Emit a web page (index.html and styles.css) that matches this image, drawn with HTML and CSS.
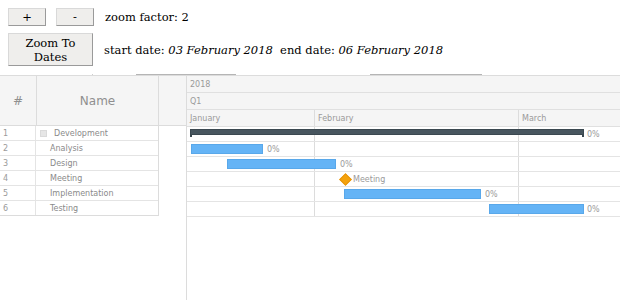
FILE: index.html
```html
<!DOCTYPE html>
<html>
<head>
<meta charset="utf-8">
<link rel="stylesheet" href="styles.css">
</head>
<body>
<div class="controls">
  <div class="ctrl-row">
    <button class="btn small">+</button>
    <button class="btn small">-</button>
    <span class="label">zoom factor: 2</span>
  </div>
  <div class="ctrl-row second">
    <button class="btn big">Zoom To<br>Dates</button>
    <span class="label">start date: <i>03 February 2018</i> &nbsp;end date: <i>06 February 2018</i></span>
  </div>
</div>
<div class="scrollmarks">
  <span class="mark m0"></span>
  <span class="mark m1"></span>
  <span class="mark m2"></span>
</div>
<div class="gantt">
  <div class="grid">
    <div class="grid-head">
      <div class="hc num">#</div>
      <div class="hc name">Name</div>
    </div>
    <div class="grow"><div class="c num">1</div><div class="c name"><span class="toggle"></span>Development</div></div>
    <div class="grow"><div class="c num">2</div><div class="c name child">Analysis</div></div>
    <div class="grow"><div class="c num">3</div><div class="c name child">Design</div></div>
    <div class="grow"><div class="c num">4</div><div class="c name child">Meeting</div></div>
    <div class="grow"><div class="c num">5</div><div class="c name child">Implementation</div></div>
    <div class="grow"><div class="c num">6</div><div class="c name child">Testing</div></div>
  </div>
  <div class="gap">
    <div class="gap-head"></div>
  </div>
  <div class="timeline">
    <div class="scale">2018</div>
    <div class="scale">Q1</div>
    <div class="scale months">
      <div class="mc jan">January</div>
      <div class="mc feb">February</div>
      <div class="mc mar">March</div>
    </div>
    <div class="trow">
      <div class="tc jan"></div><div class="tc feb"></div><div class="tc mar"></div>
      <div class="bar project" style="left:3px;width:394px"></div>
      <span class="pct" style="left:400px">0%</span>
    </div>
    <div class="trow">
      <div class="tc jan"></div><div class="tc feb"></div><div class="tc mar"></div>
      <div class="bar task" style="left:4px;width:72px"></div>
      <span class="pct" style="left:80px">0%</span>
    </div>
    <div class="trow">
      <div class="tc jan"></div><div class="tc feb"></div><div class="tc mar"></div>
      <div class="bar task" style="left:40px;width:109px"></div>
      <span class="pct" style="left:153px">0%</span>
    </div>
    <div class="trow">
      <div class="tc jan"></div><div class="tc feb"></div><div class="tc mar"></div>
      <div class="diamond" style="left:154px"></div>
      <span class="pct" style="left:166px">Meeting</span>
    </div>
    <div class="trow">
      <div class="tc jan"></div><div class="tc feb"></div><div class="tc mar"></div>
      <div class="bar task" style="left:157px;width:137px"></div>
      <span class="pct" style="left:298px">0%</span>
    </div>
    <div class="trow">
      <div class="tc jan"></div><div class="tc feb"></div><div class="tc mar"></div>
      <div class="bar task" style="left:302px;width:95px"></div>
      <span class="pct" style="left:400px">0%</span>
    </div>
  </div>
</div>
</body>
</html>
```

FILE: styles.css
```css
html, body {
  margin: 0;
  padding: 0;
  background: #fff;
  overflow: hidden;
}
body {
  width: 620px;
  height: 300px;
  font-family: "DejaVu Serif", serif;
  font-size: 11.5px;
  color: #000;
}
.controls {
  padding: 8px 8px 0 8px;
}
.ctrl-row {
  display: flex;
  align-items: center;
  gap: 10px;
  height: 18px;
}
.ctrl-row.second {
  margin-top: 7px;
  height: 33px;
}
.btn {
  font-family: "DejaVu Serif", serif;
  font-size: 11.5px;
  color: #000;
  background: #efeeec;
  border: 1px solid #d9d9d9;
  border-right-color: #9a9a9a;
  border-bottom-color: #9a9a9a;
  padding: 0;
  margin: 0;
  line-height: 14px;
}
.btn.small {
  width: 38px;
  height: 18px;
}
.btn.big {
  width: 85px;
  height: 33px;
}
.label {
  margin-left: 1px;
}
.scrollmarks {
  position: relative;
  height: 9px;
}
.mark {
  position: absolute;
  bottom: 0;
  height: 1px;
  background: #b5b5b5;
}
.m0 { left: 92px; width: 1px; background: #cfcfcf; }
.m1 { left: 136px; width: 100px; }
.m2 { left: 370px; width: 112px; }

.gantt {
  display: flex;
  height: 225px;
  border-top: 1px solid #dcdcdc;
  font-family: "DejaVu Sans", sans-serif;
  font-size: 8px;
  color: #9a9a9a;
}
.grid {
  width: 158px;
  flex: none;
  align-self: flex-start;
  border-bottom: 1px solid #dcdcdc;
  border-right: 1px solid #dcdcdc;
  box-sizing: content-box;
}
.grid-head {
  display: flex;
  height: 49px;
  background: #f5f5f5;
  border-bottom: 1px solid #dcdcdc;
}
.hc {
  display: flex;
  align-items: center;
  justify-content: center;
  font-size: 12px;
  color: #8f8f8f;
}
.hc.num { width: 36px; border-right: 1px solid #dcdcdc; }
.hc.name { flex: 1; }
.grow {
  display: flex;
  height: 14px;
  border-bottom: 1px solid #e4e4e4;
}
.grow:last-child { border-bottom: none; }
.c {
  display: flex;
  align-items: center;
  padding-top: 1px;
  box-sizing: border-box;
}
.c.num {
  width: 36px;
  padding-left: 3px;
  border-right: 1px solid #e4e4e4;
}
.c.name {
  flex: 1;
  padding-left: 4px;
  color: #8a8a8a;
}
.c.name.child { padding-left: 14px; }
.toggle {
  width: 7px;
  height: 7px;
  background: #e6e6e6;
  border: 1px solid #dadada;
  margin-right: 7px;
  box-sizing: border-box;
}
.gap {
  width: 27px;
  flex: none;
  border-right: 1px solid #dcdcdc;
}
.gap-head {
  height: 49px;
  background: #f5f5f5;
  border-bottom: 1px solid #dcdcdc;
}
.timeline {
  flex: 1;
  min-width: 0;
}
.scale {
  height: 16px;
  background: #f5f5f5;
  border-bottom: 1px solid #e0e0e0;
  display: flex;
  align-items: center;
  padding-left: 3px;
}
.scale.months {
  padding-left: 0;
  align-items: stretch;
}
.mc {
  display: flex;
  align-items: center;
  padding-left: 3px;
  box-sizing: border-box;
}
.jan { width: 128px; flex: none; border-right: 1px solid #dcdcdc; box-sizing: border-box; }
.feb { width: 204px; flex: none; border-right: 1px solid #dcdcdc; box-sizing: border-box; }
.mar { flex: 1; }
.trow {
  position: relative;
  display: flex;
  height: 14px;
  border-bottom: 1px solid #e4e4e4;
}
.tc { height: 100%; }
.bar {
  position: absolute;
  box-sizing: border-box;
}
.bar.task {
  top: 2px;
  height: 10px;
  background: #65b4f6;
  border: 1px solid #59a8ea;
}
.bar.project {
  top: 2px;
  height: 6px;
  background: #48565f;
  border: 1px solid #3b4850;
}
.bar.project::before,
.bar.project::after {
  content: "";
  position: absolute;
  top: 4px;
  width: 2px;
  height: 3px;
  background: #3b4850;
}
.bar.project::before { left: -1px; }
.bar.project::after { right: -1px; }
.diamond {
  position: absolute;
  top: 3px;
  width: 7px;
  height: 7px;
  background: #f4a20c;
  border: 1px solid #e8940a;
  transform: rotate(45deg);
}
.pct {
  position: absolute;
  top: 0;
  line-height: 15px;
  color: #9a9a9a;
}
```
